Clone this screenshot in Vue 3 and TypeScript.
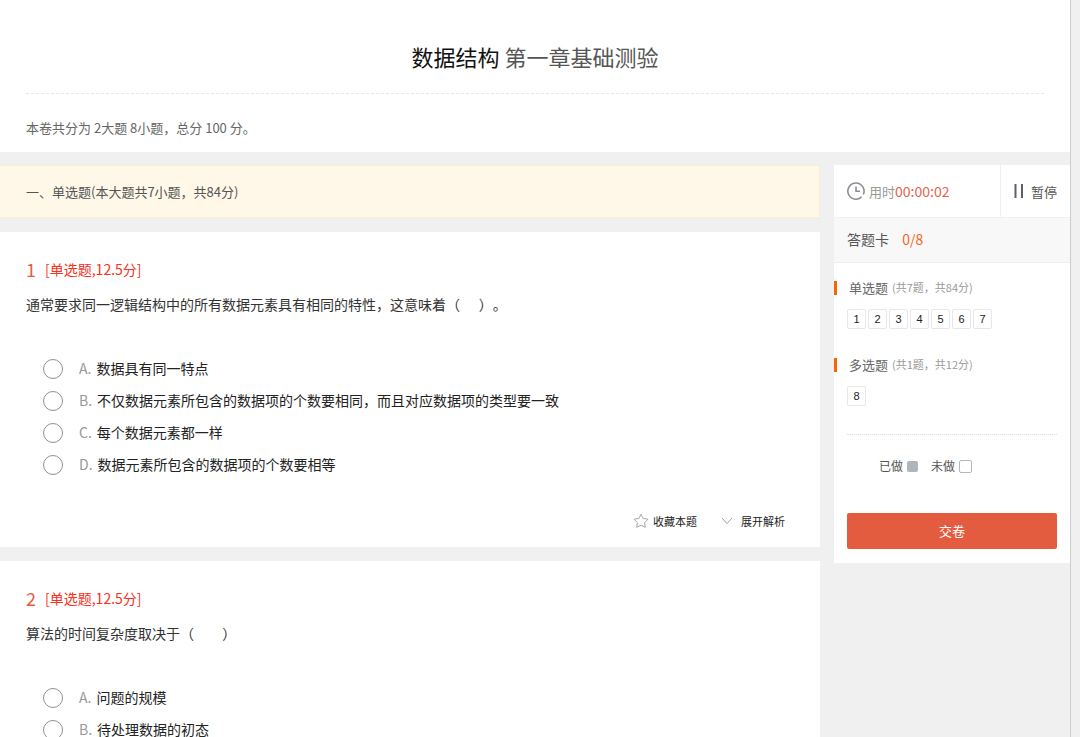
<script setup lang="ts">
import { ref } from 'vue'

interface Question {
  id: number
  stem: string
  options: string[]
  tools: boolean
}

interface Group {
  name: string
  note: string
  items: number[]
}

const letters = ['A', 'B', 'C', 'D']

const questions: Question[] = [
  {
    id: 1,
    stem: '通常要求同一逻辑结构中的所有数据元素具有相同的特性，这意味着（      ）。',
    options: [
      '数据具有同一特点',
      '不仅数据元素所包含的数据项的个数要相同，而且对应数据项的类型要一致',
      '每个数据元素都一样',
      '数据元素所包含的数据项的个数要相等',
    ],
    tools: true,
  },
  {
    id: 2,
    stem: '算法的时间复杂度取决于（         ）',
    options: ['问题的规模', '待处理数据的初态'],
    tools: false,
  },
]

const groups: Group[] = [
  { name: '单选题', note: '(共7题，共84分)', items: [1, 2, 3, 4, 5, 6, 7] },
  { name: '多选题', note: '(共1题，共12分)', items: [8] },
]

const answers = ref<Record<number, string>>({})
</script>

<template>
  <div class="page">
    <div class="content">
      <header class="head">
        <h1 class="title"><strong>数据结构</strong> 第一章基础测验</h1>
        <p class="summary">本卷共分为 2大题 8小题，总分 100 分。</p>
      </header>

      <div class="columns">
        <main class="paper">
          <h2 class="section">一、单选题(本大题共7小题，共84分)</h2>

          <article v-for="q in questions" :key="q.id" class="question">
            <div class="q-head">
              <span class="q-num">{{ q.id }}</span>
              <span class="q-tag">[单选题,12.5分]</span>
            </div>
            <p class="stem">{{ q.stem }}</p>
            <div class="options">
              <label v-for="(text, i) in q.options" :key="i" class="option">
                <input v-model="answers[q.id]" type="radio" :name="'q' + q.id" :value="letters[i]" />
                <span class="letter">{{ letters[i] }}.</span>
                <span>{{ text }}</span>
              </label>
            </div>
            <div v-if="q.tools" class="actions">
              <button type="button" class="action">
                <svg width="16" height="16" viewBox="0 0 16 16" aria-hidden="true">
                  <path d="M8 1.2 L10.1 5.4 L15 6.2 L11.6 9.6 L12.3 14.3 L8 12.2 L3.7 14.3 L4.4 9.6 L1 6.2 L5.9 5.4 Z" fill="none" stroke="#a8a8a8" stroke-linejoin="round" />
                </svg>
                收藏本题
              </button>
              <button type="button" class="action wide">
                <svg width="12" height="8" viewBox="0 0 12 8" aria-hidden="true">
                  <path d="M1 1 L6 6.5 L11 1" fill="none" stroke="#a0a0a0" />
                </svg>
                展开解析
              </button>
            </div>
          </article>
        </main>

        <aside class="card">
          <div class="clock-row">
            <div class="timer">
              <svg width="18" height="18" viewBox="0 0 18 18" aria-hidden="true">
                <path d="M14.6 14.9 A8.1 8.1 0 1 1 16.3 12.5" fill="none" stroke="#8c8f93" stroke-width="1.6" />
                <path d="M9 4.5 V9.3 H13" fill="none" stroke="#8c8f93" stroke-width="1.6" />
              </svg>
              <span class="timer-label">用时</span><span class="time">00:00:02</span>
            </div>
            <button type="button" class="pause">
              <svg width="10" height="14" viewBox="0 0 10 14" aria-hidden="true">
                <path d="M1.5 0 V14 M8 0 V14" stroke="#5b6068" stroke-width="2" />
              </svg>
              暂停
            </button>
          </div>
          <div class="card-title">答题卡 <span class="count">0/8</span></div>

          <section v-for="g in groups" :key="g.name" class="group">
            <h3 class="group-title">{{ g.name }} <small>{{ g.note }}</small></h3>
            <div class="chips">
              <button v-for="n in g.items" :key="n" type="button" class="chip">{{ n }}</button>
            </div>
          </section>

          <div class="legend">
            <span class="key">已做 <i class="done"></i></span>
            <span class="key">未做 <i class="todo"></i></span>
          </div>
          <button type="button" class="submit">交卷</button>
        </aside>
      </div>
    </div>
    <div class="gutter"></div>
  </div>
</template>

<style>
body {
  background: #f0f0f0;
}
</style>

<style scoped>
* {
  box-sizing: border-box;
}

.page {
  display: flex;
  height: 100vh;
  overflow: hidden;
  font-family: "Noto Sans CJK SC", sans-serif;
  font-size: 14px;
  text-spacing-trim: space-all;
  color: #222;
}

.content {
  flex: 1;
  min-width: 0;
}

.gutter {
  width: 10px;
  background: #f0f0f0;
  border-left: 1px solid #ccc;
}

h1, h2, h3, p {
  margin: 0;
  font-weight: 400;
}

button {
  padding: 0;
  border: 0;
  background: none;
  font-family: inherit;
  cursor: pointer;
}

.head {
  padding: 38px 26px 12px;
  background: #fff;
}

.title {
  padding-bottom: 19px;
  border-bottom: 1px dashed #e8e8e8;
  font-size: 22px;
  line-height: 36px;
  text-align: center;
  color: #555;
}

.title strong {
  font-weight: 400;
  color: #111;
}

.summary {
  padding-top: 22px;
  font-size: 13px;
  line-height: 24px;
  color: #666;
}

.columns {
  display: flex;
  align-items: flex-start;
  gap: 14px;
  padding-top: 13px;
}

.paper {
  flex: 1;
  min-width: 0;
}

.section {
  padding: 14px 26px 13px;
  border: 1px solid #fbeecb;
  border-left: 0;
  background: #fff8e8;
  font-size: 13px;
  line-height: 24px;
  color: #555;
}

.question {
  margin-top: 14px;
  padding: 23px 26px 16px;
  background: #fff;
}

.q-head {
  display: flex;
  align-items: center;
  gap: 9px;
  line-height: 28px;
}

.q-num {
  font-size: 18px;
  color: #e45c3f;
}

.q-tag {
  color: #f8301c;
}

.stem {
  margin-top: 8px;
  line-height: 26px;
  white-space: pre-wrap;
  color: #333;
}

.options {
  display: flex;
  flex-direction: column;
  margin-top: 35px;
  padding-left: 17px;
}

.option {
  display: flex;
  align-items: center;
  line-height: 32px;
}

.option input {
  appearance: none;
  width: 20px;
  height: 20px;
  margin: 2px 16px 0 0;
  border: 1px solid #8e9196;
  border-radius: 50%;
  background: #fff;
}

.option input:checked {
  background: #e45c3f;
}

.letter {
  margin-right: 5px;
  color: #999;
}

.actions {
  display: flex;
  justify-content: flex-end;
  gap: 24px;
  margin-top: 31px;
  padding-right: 9px;
}

.action {
  display: flex;
  align-items: center;
  gap: 4px;
  font-size: 11px;
  line-height: 20px;
  color: #222;
}

.wide {
  gap: 8px;
}

.card {
  flex: none;
  width: 236px;
  padding-bottom: 14px;
  background: #fff;
}

.clock-row {
  display: flex;
  height: 53px;
  border-bottom: 1px solid #f0f0f0;
}

.timer {
  display: flex;
  flex: 1;
  align-items: center;
  padding-left: 13px;
}

.timer-label {
  margin-left: 4px;
  font-size: 13px;
  color: #999;
}

.time {
  color: #e4644a;
}

.pause {
  display: flex;
  align-items: center;
  gap: 7px;
  padding: 0 13px;
  border-left: 1px solid #f0f0f0;
  font-size: 13px;
  color: #555;
}

.card-title {
  padding: 0 0 2px 13px;
  border-bottom: 1px solid #eee;
  background: #f8f8f8;
  line-height: 42px;
  color: #555;
}

.count {
  margin-left: 10px;
  color: #fa6418;
}

.group {
  padding-top: 18px;
}

.group + .group {
  padding-top: 29px;
}

.group-title {
  display: flex;
  align-items: center;
  gap: 4px;
  height: 14px;
  padding: 0 0 2px 12px;
  border-left: 3px solid #f96302;
  font-size: 13px;
  color: #666;
}

.group-title small {
  font-size: 11px;
  color: #999;
}

.chips {
  display: flex;
  gap: 2px;
  margin-top: 14px;
  padding-left: 13px;
}

.chip {
  width: 19px;
  height: 20px;
  border: 1px solid #e6e6ec;
  border-radius: 2px;
  background: #fff;
  font-family: "Liberation Sans", Arial, sans-serif;
  font-size: 11px;
  color: #222;
}

.legend {
  display: flex;
  gap: 13px;
  margin: 28px 13px 0;
  padding: 19px 0 0 32px;
  border-top: 1px dotted #e0e0cc;
  font-size: 12px;
  line-height: 24px;
  color: #555;
}

.key {
  display: flex;
  align-items: center;
  gap: 4px;
}

.done {
  width: 11px;
  height: 11px;
  border-radius: 2px;
  background: #b0b4bc;
}

.todo {
  width: 13px;
  height: 13px;
  border: 1px solid #b4b8be;
  border-radius: 2px;
}

.submit {
  display: block;
  width: calc(100% - 26px);
  height: 36px;
  margin: 35px 13px 0;
  padding-bottom: 2px;
  border-radius: 2px;
  background: #e45c3f;
  font-size: 13px;
  color: #fff;
}
</style>
